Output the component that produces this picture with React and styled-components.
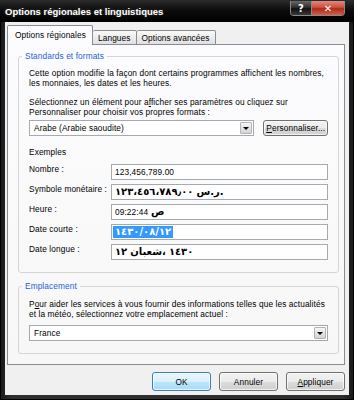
import React from "react";
import styled, { createGlobalStyle } from "styled-components";

const GlobalStyle = createGlobalStyle`
  html, body {
    margin: 0;
    padding: 0;
    background: #000;
  }
  body {
    font-family: "Liberation Sans", "DejaVu Sans", sans-serif;
    font-size: 8.3px;
    letter-spacing: 0.1px;
    color: #000;
  }
`;

const Window = styled.div`
  width: 354px;
  height: 400px;
  box-sizing: border-box;
  display: flex;
  flex-direction: column;
  padding: 0 4px 4px 4px;
  background: linear-gradient(90deg, #1a1a1a, #2e2e2e 3%, #2e2e2e 97%, #1a1a1a);
  border: 1px solid #000;
  border-top: none;
`;

const TitleBar = styled.div`
  height: 22px;
  flex-shrink: 0;
  display: flex;
  align-items: flex-start;
  margin: 0 -5px;
  padding: 0 9px 0 5px;
  background: linear-gradient(#2c2c2c, #0c0c0c 45%, #000 100%);
`;

const Title = styled.div`
  color: #fff;
  font-weight: bold;
  font-size: 9.5px;
  letter-spacing: 0;
  line-height: 23px;
  text-shadow: 0 0 3px rgba(255, 255, 255, 0.25);
`;

const Captions = styled.div`
  margin-left: auto;
  margin-top: 1px;
  display: flex;
  border: 1px solid #8a8a8a;
  border-top: none;
  border-radius: 0 0 4px 4px;
  overflow: hidden;
`;

const CaptionButton = styled.div`
  width: ${(p) => p.$w}px;
  height: 14px;
  display: flex;
  align-items: center;
  justify-content: center;
  color: #fff;
  font-family: "DejaVu Sans", sans-serif;
  font-weight: bold;
  font-size: 10px;
  background: ${(p) =>
    p.$close
      ? "linear-gradient(#e08a7c, #c9513e 45%, #b12a14 55%, #d0604c)"
      : "linear-gradient(#6a6a6a, #2e2e2e 45%, #101010 55%, #3a3a3a)"};
  border-left: ${(p) => (p.$close ? "1px solid #8a8a8a" : "none")};
`;

const Client = styled.div`
  flex: 1;
  display: flex;
  flex-direction: column;
  background: #f0f0f0;
  padding: 4px 4px 0 2px;
`;

const TabRow = styled.div`
  display: flex;
  align-items: flex-end;
  height: 19px;
  margin-bottom: -1px;
  position: relative;
  z-index: 1;
`;

const Tab = styled.div`
  box-sizing: border-box;
  height: ${(p) => (p.$active ? 20 : 15)}px;
  padding: ${(p) => (p.$active ? "0 6px 0 7px" : "0 5px")};
  line-height: ${(p) => (p.$active ? 18 : 15)}px;
  border: 1px solid #898c95;
  border-bottom: ${(p) => (p.$active ? "none" : "1px solid #898c95")};
  border-left: ${(p) => (p.$first || p.$active ? "1px solid #898c95" : "none")};
  border-radius: 2px 2px 0 0;
  background: ${(p) =>
    p.$active ? "#fcfcfe" : "linear-gradient(#fafafa, #ececec 50%, #e1e1e1)"};
  white-space: nowrap;
`;

const Panel = styled.div`
  flex: 1;
  display: flex;
  flex-direction: column;
  border: 1px solid #898c95;
  background: linear-gradient(#fcfcfe, #f7f7f7);
  padding: 6px 5px 0 10px;
  margin-bottom: 7px;
`;

const Group = styled.fieldset`
  margin: 0 0 ${(p) => p.$mb || 0}px 0;
  padding: ${(p) => p.$pt}px 10px ${(p) => p.$pb}px 10px;
  border: 1px solid #d5d5d5;
  border-radius: 3px;
  min-width: 0;
`;

const Legend = styled.legend`
  color: #1f63d6;
  line-height: 10px;
  padding: 0 3px;
  margin-left: -7px;
`;

const Para = styled.p`
  margin: ${(p) => p.$mt || 0}px 0 0 0;
  line-height: 10px;
  white-space: nowrap;
`;

const U = styled.span`
  text-decoration: underline;
`;

const ComboRow = styled.div`
  display: flex;
  align-items: center;
  margin-top: ${(p) => p.$mt}px;
`;

const Combo = styled.div`
  box-sizing: border-box;
  width: ${(p) => p.$w}px;
  height: 16px;
  display: flex;
  align-items: center;
  padding: 0 1px 0 4px;
  border: 1px solid #a5a9b0;
  background: #fff;
`;

const ComboText = styled.span`
  flex: 1;
`;

const DropButton = styled.div`
  box-sizing: border-box;
  width: 12px;
  height: 12px;
  display: flex;
  align-items: center;
  justify-content: center;
  border: 1px solid #b4b4b4;
  border-radius: 1px;
  background: linear-gradient(#f6f6f6, #e4e4e4 50%, #d4d4d4);

  &::after {
    content: "";
    border-left: 3px solid transparent;
    border-right: 3px solid transparent;
    border-top: 3px solid #000;
  }
`;

const Button = styled.div`
  box-sizing: border-box;
  width: ${(p) => p.$w}px;
  height: ${(p) => p.$h}px;
  margin-left: ${(p) => p.$ml || 0}px;
  display: flex;
  align-items: center;
  justify-content: center;
  border: 1px solid ${(p) => (p.$default ? "#3c7fb1" : "#707070")};
  border-radius: 3px;
  background: ${(p) =>
    p.$default
      ? "linear-gradient(#eaf6fd, #d9f0fc 50%, #bee6fd 50%, #a7d9f5)"
      : "linear-gradient(#f2f2f2, #ebebeb 50%, #dddddd 50%, #cfcfcf)"};
  box-shadow: inset 0 0 0 1px rgba(255, 255, 255, 0.7);
  white-space: nowrap;
`;

const Examples = styled.div`
  margin-top: 11px;
  line-height: 10px;
`;

const Rows = styled.div`
  display: flex;
  flex-direction: column;
  gap: 4px;
  margin-top: 7px;
`;

const Row = styled.div`
  display: flex;
  align-items: center;
`;

const Label = styled.div`
  width: 82px;
  flex-shrink: 0;
  margin-top: -6px;
  white-space: nowrap;
`;

const Field = styled.div`
  box-sizing: border-box;
  width: 219px;
  height: 16px;
  display: flex;
  align-items: center;
  gap: 3px;
  padding: 0 3px;
  border: 1px solid #a5a9b0;
  background: #fff;
`;

const Arabic = styled.span`
  font-family: "DejaVu Sans", sans-serif;
  font-size: 10px;
  font-weight: bold;
  letter-spacing: 0;
  line-height: 12px;
  background: ${(p) => (p.$selected ? "#3399ff" : "transparent")};
  color: ${(p) => (p.$selected ? "#fff" : "#000")};
  padding: 0 ${(p) => (p.$selected ? 2 : 0)}px;
  margin-left: ${(p) => (p.$selected ? -2 : 0)}px;
`;

const Footer = styled.div`
  display: flex;
  justify-content: flex-end;
  gap: 8px;
  padding-bottom: 4px;
`;

const rows = [
  { label: "Nombre :", value: [{ t: "123,456,789.00", latin: true }] },
  {
    label: "Symbole monétaire :",
    value: [{ t: "١٢٣،٤٥٦،٧٨٩٫٠٠" }, { t: "ر.س." }],
  },
  { label: "Heure :", value: [{ t: "09:22:44", latin: true }, { t: "ص" }] },
  { label: "Date courte :", value: [{ t: "١٤٣٠/٠٨/١٢", selected: true }] },
  {
    label: "Date longue :",
    value: [{ t: "١٢" }, { t: "شعبان،" }, { t: "١٤٣٠" }],
  },
];

export default function App() {
  return (
    <>
      <GlobalStyle />
      <Window>
        <TitleBar>
          <Title>Options régionales et linguistiques</Title>
          <Captions>
            <CaptionButton $w={20}>?</CaptionButton>
            <CaptionButton $w={32} $close>
              ✕
            </CaptionButton>
          </Captions>
        </TitleBar>
        <Client>
          <TabRow>
            <Tab $active $first>
              Options régionales
            </Tab>
            <Tab>Langues</Tab>
            <Tab>Options avancées</Tab>
          </TabRow>
          <Panel>
            <Group $pt={7} $pb={12} $mb={8}>
              <Legend>Standards et formats</Legend>
              <Para>
                Cette option modifie la façon dont certains programmes affichent les nombres,
                <br />
                les monnaies, les dates et les heures.
              </Para>
              <Para $mt={9}>
                Sélectionnez un élément pour a<U>f</U>ficher ses paramètres ou cliquez sur
                <br />
                Personnaliser pour choisir vos propres formats :
              </Para>
              <ComboRow $mt={3}>
                <Combo $w={227}>
                  <ComboText>Arabe (Arabie saoudite)</ComboText>
                  <DropButton />
                </Combo>
                <Button $w={65} $h={16} $ml={9}>
                  <span>
                    <U>P</U>ersonnaliser...
                  </span>
                </Button>
              </ComboRow>
              <Examples>Exemples</Examples>
              <Rows>
                {rows.map((r) => (
                  <Row key={r.label}>
                    <Label>{r.label}</Label>
                    <Field dir="ltr">
                      {r.value.map((v, i) =>
                        v.latin ? (
                          <span key={i}>{v.t}</span>
                        ) : (
                          <Arabic key={i} $selected={v.selected}>
                            {v.t}
                          </Arabic>
                        )
                      )}
                    </Field>
                  </Row>
                ))}
              </Rows>
            </Group>
            <Group $pt={8} $pb={12}>
              <Legend>Emplacement</Legend>
              <Para>
                P<U>o</U>ur aider les services à vous fournir des informations telles que les actualités
                <br />
                et la météo, sélectionnez votre emplacement actuel :
              </Para>
              <ComboRow $mt={6}>
                <Combo $w={302}>
                  <ComboText>France</ComboText>
                  <DropButton />
                </Combo>
              </ComboRow>
            </Group>
          </Panel>
          <Footer>
            <Button $w={59} $h={19} $default>
              OK
            </Button>
            <Button $w={59} $h={19}>
              Annuler
            </Button>
            <Button $w={59} $h={19}>
              <span>
                <U>A</U>ppliquer
              </span>
            </Button>
          </Footer>
        </Client>
      </Window>
    </>
  );
}
